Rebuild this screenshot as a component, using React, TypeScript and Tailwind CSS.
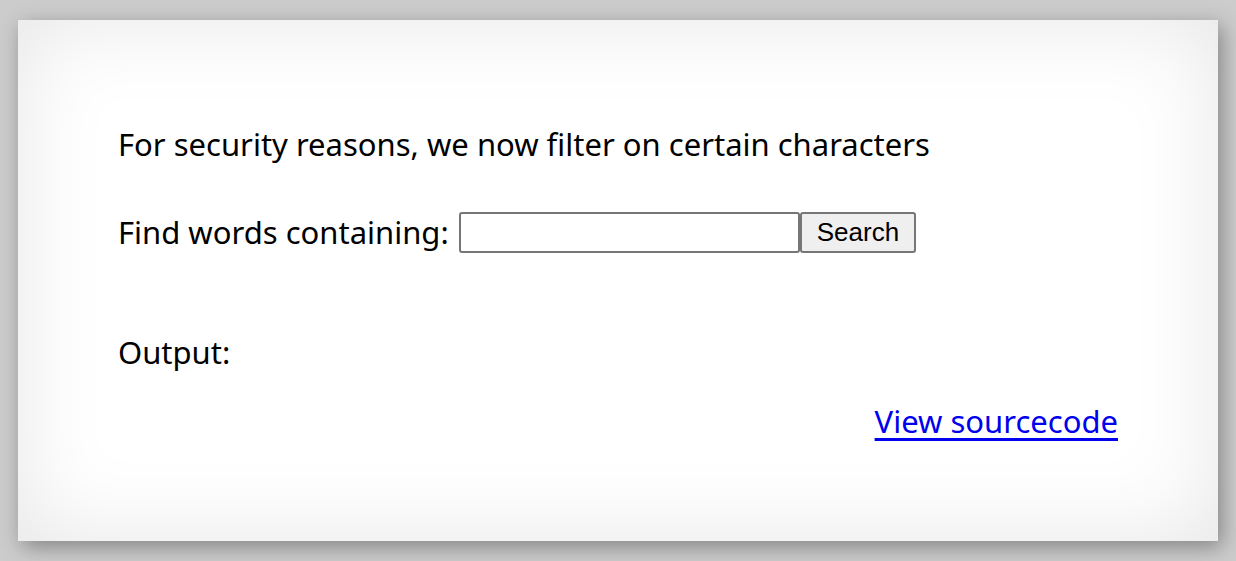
export default function App() {
  return (
    <div className="min-h-[561px] w-[1236px] bg-[#cccccc] pt-[20px] pl-[18px]" style={{ fontFamily: '"Noto Sans", "Open Sans", sans-serif' }}>
      <div className="w-[1200px] h-[521px] bg-white px-[100px] pt-[100px] shadow-[inset_0_0_90px_#e6e6e6,_4px_6px_20px_rgba(0,0,0,0.35)] text-[31px] text-black">
        <div className="h-[48px] leading-[48px]">For security reasons, we now filter on certain characters</div>
        <div className="mt-[44px] h-[41px] flex items-center">
          <span className="leading-[41px]">Find words containing:</span>
          <input className="ml-[10px] w-[341px] h-[41px] border-2 border-[#767676] rounded-[3px] bg-white outline-none" />
          <button className="h-[41px] px-[15px] border-2 border-[#767676] rounded-[3px] bg-[#efefef] text-[26px] leading-[37px]" style={{ fontFamily: '"Liberation Sans", Arial, sans-serif' }}>Search</button>
        </div>
        <div className="mt-[75px] h-[48px] leading-[48px]">Output:</div>
        <div className="mt-[21px] h-[48px] leading-[48px] text-right">
          <a href="#" className="text-[#0000ee] underline underline-offset-[5px]">View sourcecode</a>
        </div>
      </div>
    </div>
  );
}
